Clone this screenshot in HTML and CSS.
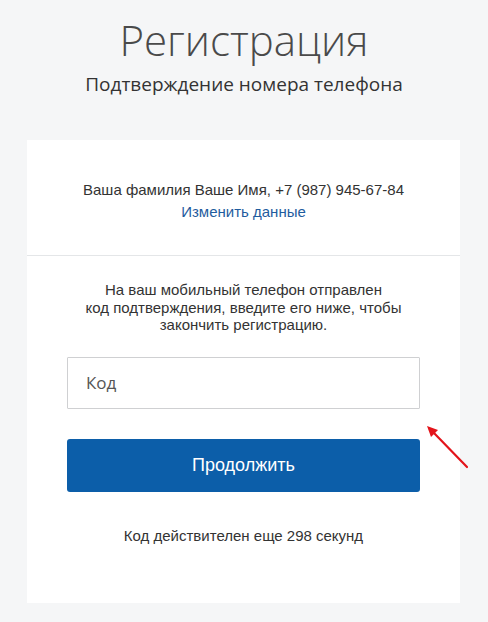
FILE: index.html
```html
<!DOCTYPE html>
<html lang="ru">
<head>
<meta charset="utf-8">
<link rel="stylesheet" href="styles.css">
</head>
<body>
<div class="page">
  <h1 class="title">Регистрация</h1>
  <h2 class="subtitle">Подтверждение номера телефона</h2>
  <div class="card">
    <div class="card-top">
      <div class="user">Ваша фамилия Ваше Имя, +7 (987) 945-67-84</div>
      <a class="change" href="#">Изменить данные</a>
    </div>
    <div class="card-body">
      <p class="info">На ваш мобильный телефон отправлен<br>код подтверждения, введите его ниже, чтобы<br>закончить регистрацию.</p>
      <div class="field-wrap">
        <input class="code" type="text" placeholder="Код">
        <svg class="arrow" width="50" height="50" viewBox="0 0 50 50">
          <line x1="46" y1="46" x2="12" y2="11" stroke="#e3141b" stroke-width="2.2" stroke-linecap="round"/>
          <polygon points="6,5 17,9 10,16" fill="#e3141b"/>
        </svg>
      </div>
      <button class="submit" type="button">Продолжить</button>
      <div class="timer">Код действителен еще 298 секунд</div>
    </div>
  </div>
</div>
</body>
</html>
```
FILE: styles.css
```css
html, body {
  margin: 0;
  padding: 0;
  background: #f5f6f7;
}
.page {
  width: 488px;
  height: 622px;
  box-sizing: border-box;
  padding-top: 12px;
  font-family: "Liberation Sans", Arial, sans-serif;
  color: #333;
}
.title {
  margin: 0;
  text-align: center;
  font-family: "Open Sans", sans-serif;
  font-weight: 300;
  font-size: 42px;
  line-height: 56px;
  color: #4a4a4a;
  letter-spacing: 0;
}
.subtitle {
  margin: 4px 0 0;
  text-align: center;
  font-family: "Open Sans", sans-serif;
  font-weight: 400;
  font-size: 19px;
  line-height: 24px;
  color: #333;
}
.card {
  margin: 44px 28px 0 27px;
  background: #fff;
  height: 463px;
}
.card-top {
  padding: 39px 0 32px;
  text-align: center;
  font-size: 15px;
  line-height: 22px;
  border-bottom: 1px solid #e4e6e8;
  display: flex;
  flex-direction: column;
  align-items: center;
}
.change {
  color: #1f5c9e;
  text-decoration: none;
}
.card-body {
  padding: 25px 40px 0;
}
.info {
  margin: 0;
  text-align: center;
  font-size: 15px;
  line-height: 17.5px;
  color: #333;
}
.field-wrap {
  position: relative;
  margin-top: 23px;
}
.code {
  display: block;
  width: 100%;
  box-sizing: border-box;
  height: 52px;
  border: 1px solid #cfd0d2;
  border-radius: 1px;
  padding: 0 18px;
  font-family: "Open Sans", sans-serif;
  font-size: 17px;
  color: #333;
  outline: none;
}
.code::placeholder {
  color: #555;
}
.arrow {
  position: absolute;
  left: 354px;
  top: 64px;
}
.submit {
  display: block;
  width: 100%;
  height: 53px;
  margin-top: 30px;
  border: none;
  border-radius: 3px;
  background: #0c5ea9;
  color: #fff;
  font-family: "Liberation Sans", Arial, sans-serif;
  font-size: 18px;
}
.timer {
  margin-top: 35px;
  text-align: center;
  font-size: 15px;
  line-height: 17px;
  color: #333;
}
```
